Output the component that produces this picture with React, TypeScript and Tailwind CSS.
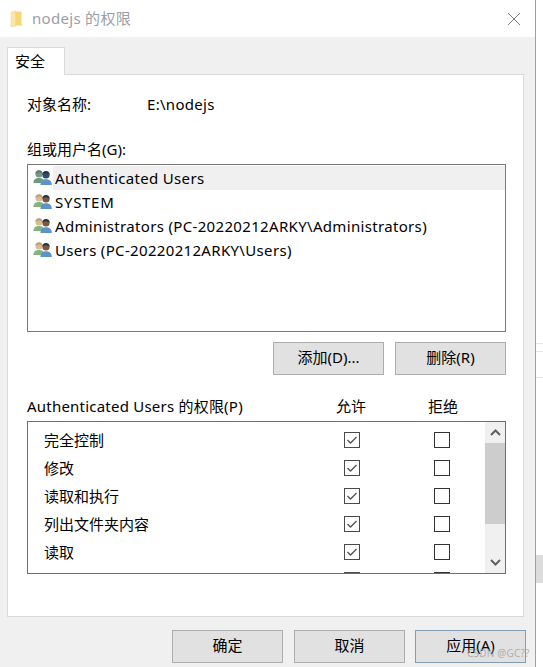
import React from "react";

const FONT = "font-['Noto_Sans','Noto_Sans_CJK_SC',sans-serif]";

function Folder() {
  return (
    <svg width="14" height="18" viewBox="0 0 14 18" className="shrink-0">
      <path d="M4 1.5 L11.5 1.5 L11.5 14 L12.5 14.5 L12.5 15.5 L4 15.5 Z" fill="#f6d675" />
      <path d="M1 2 L5.5 1 L5.5 16 L1 17 Z" fill="#fbe7a6" stroke="#e8d28e" strokeWidth="0.5" />
    </svg>
  );
}

function Close() {
  return (
    <svg width="14" height="14" viewBox="0 0 14 14" className="shrink-0">
      <path d="M1 1 L13 13 M13 1 L1 13" stroke="#7d7d7d" strokeWidth="1" fill="none" />
    </svg>
  );
}

function Users({ dim }: { dim?: boolean }) {
  const leftHead = dim ? "#7f9488" : "#d8bd94";
  const leftHair = dim ? "#5f7a72" : "#b9a27a";
  const leftBody = dim ? "#6e9a80" : "#86b27e";
  return (
    <svg width="20" height="18" viewBox="0 0 20 18" className="shrink-0">
      <circle cx="6" cy="5" r="3.6" fill={leftHead} />
      <path d="M2.4 4.5 A3.6 3.6 0 0 1 9.5 4 L6 3.4 Z" fill={leftHair} />
      <path d="M0.5 14 C0.5 10 3 9 6 9 C9 9 11 10 11 14 Z" fill={leftBody} />
      <circle cx="13" cy="6" r="3.6" fill={dim ? "#2f4f68" : "#7a5a3c"} />
      <path d="M9.4 5.5 A3.6 3.6 0 0 1 16.6 5.5 L13 4.2 Z" fill="#25384c" />
      <path d="M7.5 16 C7.5 11.5 10 10.2 13 10.2 C16 10.2 18.8 11.5 18.8 16 Z" fill="#5d93c8" />
    </svg>
  );
}

function Box({ checked }: { checked?: boolean }) {
  return (
    <div className={`w-[16px] h-[16px] shrink-0 border bg-white flex items-center justify-center ${checked ? "border-[#4a4a4a]" : "border-[#333333]"}`}>
      {checked && (
        <svg width="14" height="14" viewBox="0 0 14 14">
          <path d="M2.5 7 L5.5 10 L11.5 4" stroke="#505050" strokeWidth="1.3" fill="none" />
        </svg>
      )}
    </div>
  );
}

function Btn({ children, blue }: { children: React.ReactNode; blue?: boolean }) {
  return (
    <div className={`w-[111px] h-[33px] shrink-0 border bg-[#e1e1e1] flex items-center justify-center pb-[2px] text-[15px] text-black ${blue ? "border-[#7f9db5]" : "border-[#adadad]"}`}>
      {children}
    </div>
  );
}

const users = [
  "Authenticated Users",
  "SYSTEM",
  "Administrators (PC-20220212ARKY\\Administrators)",
  "Users (PC-20220212ARKY\\Users)",
];
const perms = ["完全控制", "修改", "读取和执行", "列出文件夹内容", "读取", ""];

export default function App() {
  return (
    <div className={`relative w-[543px] h-[667px] overflow-hidden flex bg-white text-[15px] text-black ${FONT}`}>
      <div className="w-[536px] h-full shrink-0 flex flex-col border-r border-[#a0a0a0]">
        <div className="h-[37px] shrink-0 bg-white flex items-center pl-[10px] pr-[14px]">
          <Folder />
          <span className="ml-[8px] text-[#9aa0a8] text-[15px] tracking-[0.3px]">nodejs 的权限</span>
          <div className="flex-1" />
          <Close />
        </div>
        <div className="flex-1 bg-[#f0f0f0] pl-[7px] pr-[11px] pt-[10px] flex flex-col">
          <div className="relative z-10 w-[58px] h-[28px] -mb-px bg-white border border-b-0 border-[#d9d9d9] flex items-center pl-[7px] pb-[1px]">
            安全
          </div>
          <div className="h-[543px] shrink-0 bg-white border border-[#d9d9d9] pl-[19px] pr-[17px] pt-[20px] flex flex-col">
            <div className="h-[20px] flex items-center pb-[2px]">
              <span className="w-[120px]">对象名称:</span>
              <span className="tracking-[0.3px]">E:\nodejs</span>
            </div>
            <div className="h-[20px] mt-[24px] flex items-center">组或用户名(G):</div>
            <div className="mt-[5px] h-[168px] shrink-0 border border-[#7a7a7a] pt-[1px]">
              {users.map((u, i) => (
                <div key={u} className="h-[24px] flex items-center pl-[5px]">
                  <Users dim={i === 0} />
                  <span className={`flex-1 h-full flex items-center pl-[2px] ${i === 1 ? "tracking-[0.7px]" : "tracking-[0.33px]"} ${i === 0 ? "bg-[#f0f0f0]" : ""}`}>{u}</span>
                </div>
              ))}
            </div>
            <div className="mt-[10px] flex justify-end gap-[11px]">
              <Btn>添加(D)...</Btn>
              <Btn>删除(R)</Btn>
            </div>
            <div className="mt-[22px] h-[20px] flex items-center pb-[2px]">
              <span className="w-[309px] tracking-[0.22px]">Authenticated Users 的权限(P)</span>
              <span className="w-[92px]">允许</span>
              <span>拒绝</span>
            </div>
            <div className="mt-[4px] h-[153px] shrink-0 border border-[#6f6f6f] flex overflow-hidden">
              <div className="flex-1 pt-[4px] overflow-hidden">
                {perms.map((p, i) => (
                  <div key={i} className="h-[28px] flex items-center pl-[16px]">
                    <span className="w-[300px]">{p}</span>
                    <Box checked />
                    <div className="w-[74px]" />
                    <Box />
                  </div>
                ))}
              </div>
              <div className="w-[20px] shrink-0 bg-[#f0f0f0] flex flex-col">
                <div className="h-[21px] flex items-center justify-center">
                  <svg width="11" height="7" viewBox="0 0 11 7">
                    <path d="M1 6 L5.5 1.5 L10 6" stroke="#606060" strokeWidth="2" fill="none" />
                  </svg>
                </div>
                <div className="h-[81px] bg-[#cdcdcd]" />
                <div className="flex-1 flex items-end justify-center pb-[7px]">
                  <svg width="11" height="7" viewBox="0 0 11 7">
                    <path d="M1 1 L5.5 5.5 L10 1" stroke="#606060" strokeWidth="2" fill="none" />
                  </svg>
                </div>
              </div>
            </div>
          </div>
          <div className="mt-[13px] pl-[165px] flex gap-[11px]">
            <Btn>确定</Btn>
            <Btn>取消</Btn>
            <div className="-ml-px">
              <Btn blue>应用(A)</Btn>
            </div>
          </div>
        </div>
      </div>
      <div className="flex-1 flex flex-col">
        <div className="h-[343px] shrink-0" />
        <div className="h-[8px] shrink-0 border-t border-[#e5e5e5]" />
        <div className="h-[26px] shrink-0 border-t border-[#e5e5e5]" />
        <div className="h-[178px] shrink-0 border-t border-[#e5e5e5]" />
        <div className="h-[28px] shrink-0 bg-[#dcdcdc]" />
      </div>
      <span className="absolute left-[467px] top-[646px] text-[10px] tracking-[0.2px] text-[#a0a0a0]/80">CSDN @GC??</span>
    </div>
  );
}
